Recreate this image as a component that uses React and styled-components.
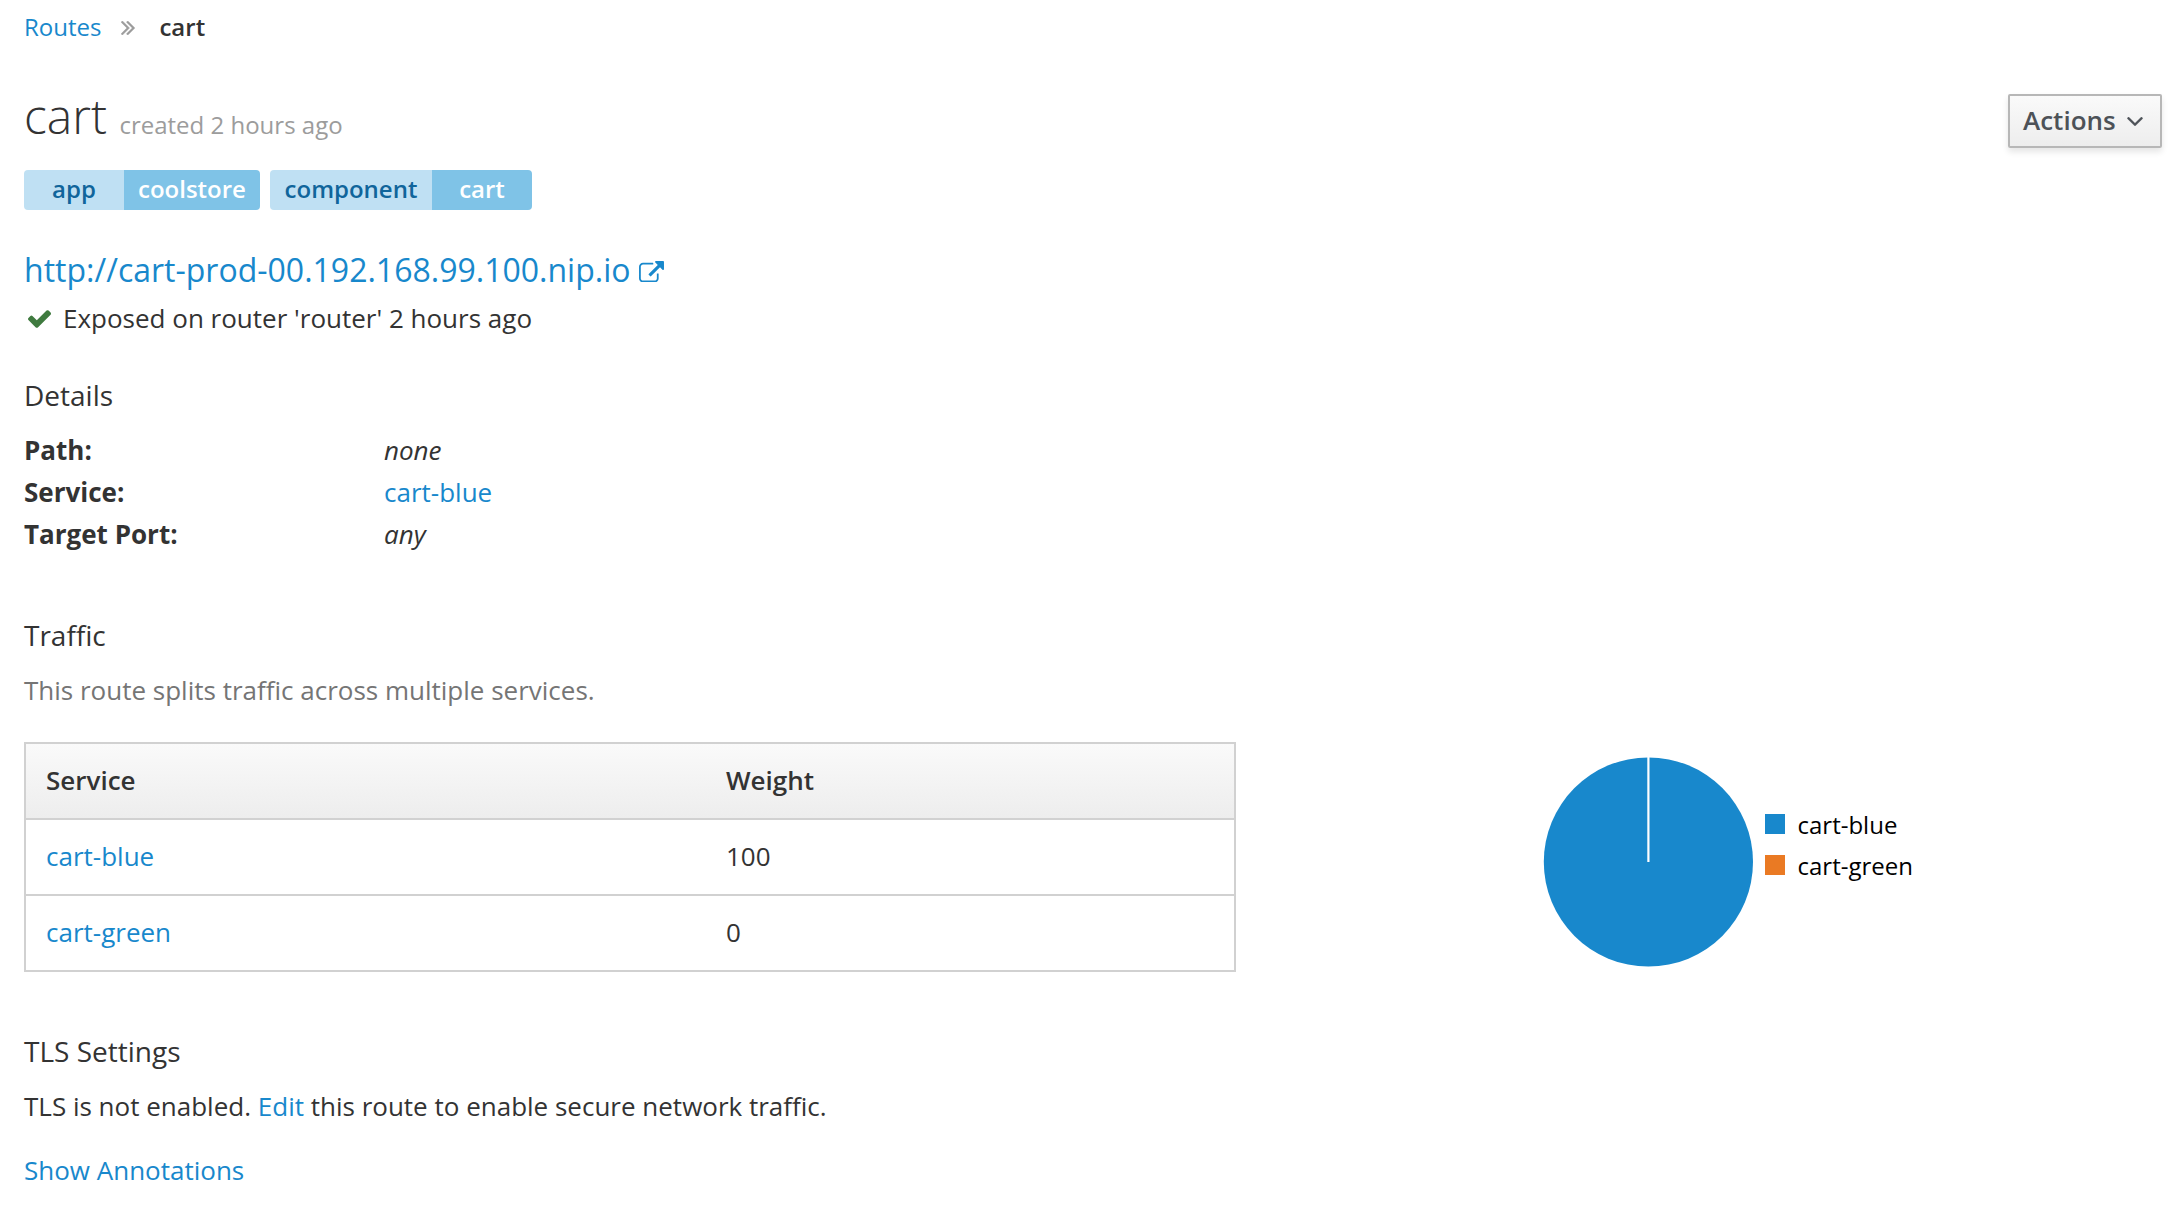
import React from 'react';
import styled, { createGlobalStyle } from 'styled-components';

const GlobalStyle = createGlobalStyle`
  * { box-sizing: border-box; }
  body {
    margin: 0;
    background: #fff;
    color: #333;
    font: 26px/42px "Open Sans", "Noto Sans", sans-serif;
  }
`;

const Page = styled.main`
  padding: 7px 20px 36px 24px;
`;

const Link = styled.a`
  color: #1888cc;
  text-decoration: none;
  cursor: pointer;
`;

const Breadcrumb = styled.nav`
  display: flex;
  align-items: center;
  height: 40px;
  font-size: 24px;
  line-height: 40px;
`;

const BreadcrumbIcon = styled.svg`
  width: 14px;
  height: 14px;
  margin: 2px 24px 0 20px;
`;

const Current = styled.strong`
  font-weight: 600;
`;

const Header = styled.header`
  display: flex;
  justify-content: space-between;
  align-items: flex-start;
  height: 52px;
  margin-top: 42px;
`;

const Title = styled.h1`
  margin: 0;
  font-size: 48px;
  font-weight: 300;
  line-height: 54px;
`;

const Created = styled.small`
  font-size: 24px;
  font-weight: 400;
  line-height: 1;
  color: #9c9c9c;
`;

const ActionsButton = styled.button`
  display: flex;
  align-items: center;
  width: 154px;
  height: 54px;
  margin-top: 5px;
  padding: 0 0 2px 13px;
  border: 2px solid #b7b7b7;
  border-radius: 2px;
  background: linear-gradient(#fafafa, #ededed);
  box-shadow: 0 4px 6px rgba(3, 3, 3, 0.1);
  color: #4d5258;
  font: 600 26px/42px "Open Sans", "Noto Sans", sans-serif;
`;

const ButtonChevron = styled.svg`
  width: 16px;
  height: 9px;
  margin: 2px 0 0 11px;
`;

const Labels = styled.div`
  display: flex;
  gap: 10px;
  margin-top: 29px;
`;

const LabelPair = styled.div`
  display: flex;
  height: 40px;
  border-radius: 4px;
  overflow: hidden;
  font-size: 24px;
  font-weight: 600;
  line-height: 38px;
  text-align: center;
`;

const LabelPart = styled.span`
  width: ${(p) => p.$width}px;
  background: ${(p) => (p.$value ? '#7fc3e7' : '#bfe0f3')};
  color: ${(p) => (p.$value ? '#fff' : '#10659b')};
`;

const RouteUrl = styled.h3`
  display: flex;
  align-items: center;
  margin: 34px 0 0;
  font-size: 32px;
  font-weight: 400;
  line-height: 52px;
`;

const ExternalIcon = styled.svg`
  width: 25px;
  height: 21.4px;
  margin: 3px 0 0 9px;
`;

const Status = styled.div`
  display: flex;
  align-items: center;
  margin-top: 1px;
`;

const StatusIcon = styled.svg`
  width: 23px;
  height: 18px;
  margin: 2px 12px 0 4px;
`;

const Section = styled.section`
  margin-top: ${(p) => p.$gap}px;
`;

const Heading = styled.h4`
  margin: 0 0 19px;
  font-size: 28px;
  font-weight: 400;
  line-height: 30px;
`;

const Details = styled.dl`
  display: grid;
  grid-template-columns: 360px auto;
  margin: 0;
`;

const Term = styled.dt`
  font-weight: 700;
`;

const Value = styled.dd`
  margin: 0;
`;

const Paragraph = styled.p`
  margin: 0;
  color: ${(p) => (p.$muted ? '#757575' : '#333')};
`;

const TrafficRow = styled.div`
  display: grid;
  grid-template-columns: 1212px 1fr;
  margin-top: 31px;
`;

const Table = styled.table`
  width: 1212px;
  height: 230px;
  border-collapse: collapse;
  border: 2px solid #d1d1d1;
  table-layout: fixed;

  tr {
    height: 76px;
    border-bottom: 2px solid #d1d1d1;
  }
  thead {
    background: linear-gradient(#fafafa, #ededed);
  }
  th,
  td {
    padding: 0 0 2px 20px;
    text-align: left;
  }
  th {
    font-weight: 600;
  }
  th:first-child {
    width: 681px;
  }
`;

const Chart = styled.div`
  display: flex;
  align-items: flex-start;
  padding: 14px 0 0 306px;
`;

const Pie = styled.svg`
  width: 212px;
  height: 212px;
`;

const Legend = styled.ul`
  margin: 48px 0 0 11px;
  padding: 0;
  list-style: none;
  color: #000;
  font-size: 24px;
  line-height: 41px;
`;

const LegendItem = styled.li`
  display: flex;
  align-items: flex-start;
  height: 41px;
`;

const Swatch = styled.span`
  width: 20px;
  height: 20px;
  margin: 10px 12.5px 0 0;
  background: ${(p) => p.$color};
`;

const Annotations = styled.div`
  margin-top: 22px;
`;

const services = [
  { name: 'cart-blue', weight: 100, color: '#1888cc' },
  { name: 'cart-green', weight: 0, color: '#ea7a23' },
];

const labels = [
  { key: 'app', value: 'coolstore', widths: [100, 136] },
  { key: 'component', value: 'cart', widths: [162, 100] },
];

export default function App() {
  return (
    <>
      <GlobalStyle />
      <Page>
        <Breadcrumb>
          <Link>Routes</Link>
          <BreadcrumbIcon viewBox="397 461 966 998" fill="#9c9c9c" stroke="#9c9c9c" strokeWidth="30">
            <path d="M979 960q0 13-10 23l-466 466q-10 10-23 10t-23-10l-50-50q-10-10-10-23t10-23l393-393-393-393q-10-10-10-23t10-23l50-50q10-10 23-10t23 10l466 466q10 10 10 23zm384 0q0 13-10 23l-466 466q-10 10-23 10t-23-10l-50-50q-10-10-10-23t10-23l393-393-393-393q-10-10-10-23t10-23l50-50q10-10 23-10t23 10l466 466q10 10 10 23z" />
          </BreadcrumbIcon>
          <Current>cart</Current>
        </Breadcrumb>

        <Header>
          <Title>
            cart <Created>created 2 hours ago</Created>
          </Title>
          <ActionsButton>
            Actions
            <ButtonChevron viewBox="397 653 998 582" fill="#4d5258" stroke="#4d5258" strokeWidth="20">
              <path d="M1395 736q0 13-10 23l-466 466q-10 10-23 10t-23-10l-466-466q-10-10-10-23t10-23l50-50q10-10 23-10t23 10l393 393 393-393q10-10 23-10t23 10l50 50q10 10 10 23z" />
            </ButtonChevron>
          </ActionsButton>
        </Header>

        <Labels>
          {labels.map((l) => (
            <LabelPair key={l.key}>
              <LabelPart $width={l.widths[0]}>{l.key}</LabelPart>
              <LabelPart $width={l.widths[1]} $value>{l.value}</LabelPart>
            </LabelPair>
          ))}
        </Labels>

        <RouteUrl>
          <Link>http://cart-prod-00.192.168.99.100.nip.io</Link>
          <ExternalIcon viewBox="0 0 1792 1536" fill="#1888cc">
            <path d="M1408 928v320q0 119-84.500 203.500t-203.500 84.500h-832q-119 0-203.500-84.500t-84.500-203.500v-832q0-119 84.500-203.500t203.500-84.500h704q14 0 23 9t9 23v64q0 14-9 23t-23 9h-704q-66 0-113 47t-47 113v832q0 66 47 113t113 47h832q66 0 113-47t47-113v-320q0-14 9-23t23-9h64q14 0 23 9t9 23zm384-864v512q0 26-19 45t-45 19-45-19l-176-176-652 652q-10 10-23 10t-23-10l-114-114q-10-10-10-23t10-23l652-652-176-176q-19-19-19-45t19-45 45-19h512q26 0 45 19t19 45z" />
          </ExternalIcon>
        </RouteUrl>
        <Status>
          <StatusIcon viewBox="121 334 1550 1188" fill="#3f7a3f">
            <path d="M1671 566q0 40-28 68l-724 724-136 136q-28 28-68 28t-68-28l-136-136-362-362q-28-28-28-68t28-68l136-136q28-28 68-28t68 28l294 295 656-657q28-28 68-28t68 28l136 136q28 28 28 68z" />
          </StatusIcon>
          Exposed on router 'router' 2 hours ago
        </Status>

        <Section $gap={41}>
          <Heading>Details</Heading>
          <Details>
            <Term>Path:</Term>
            <Value><em>none</em></Value>
            <Term>Service:</Term>
            <Value><Link>cart-blue</Link></Value>
            <Term>Target Port:</Term>
            <Value><em>any</em></Value>
          </Details>
        </Section>

        <Section $gap={65}>
          <Heading>Traffic</Heading>
          <Paragraph $muted>This route splits traffic across multiple services.</Paragraph>
          <TrafficRow>
            <Table>
              <thead>
                <tr>
                  <th>Service</th>
                  <th>Weight</th>
                </tr>
              </thead>
              <tbody>
                {services.map((s) => (
                  <tr key={s.name}>
                    <td><Link>{s.name}</Link></td>
                    <td>{s.weight}</td>
                  </tr>
                ))}
              </tbody>
            </Table>
            <Chart>
              <Pie viewBox="-106.400 -106 212 212">
                <circle r="104.600" fill="#1888cc" />
                <path d="M0 -106V0" stroke="#fff" strokeWidth="2.200" />
              </Pie>
              <Legend>
                {services.map((s) => (
                  <LegendItem key={s.name}>
                    <Swatch $color={s.color} />
                    {s.name}
                  </LegendItem>
                ))}
              </Legend>
            </Chart>
          </TrafficRow>
        </Section>

        <Section $gap={64}>
          <Heading>TLS Settings</Heading>
          <Paragraph>
            TLS is not enabled. <Link>Edit</Link> this route to enable secure network traffic.
          </Paragraph>
          <Annotations>
            <Link>Show Annotations</Link>
          </Annotations>
        </Section>
      </Page>
    </>
  );
}
